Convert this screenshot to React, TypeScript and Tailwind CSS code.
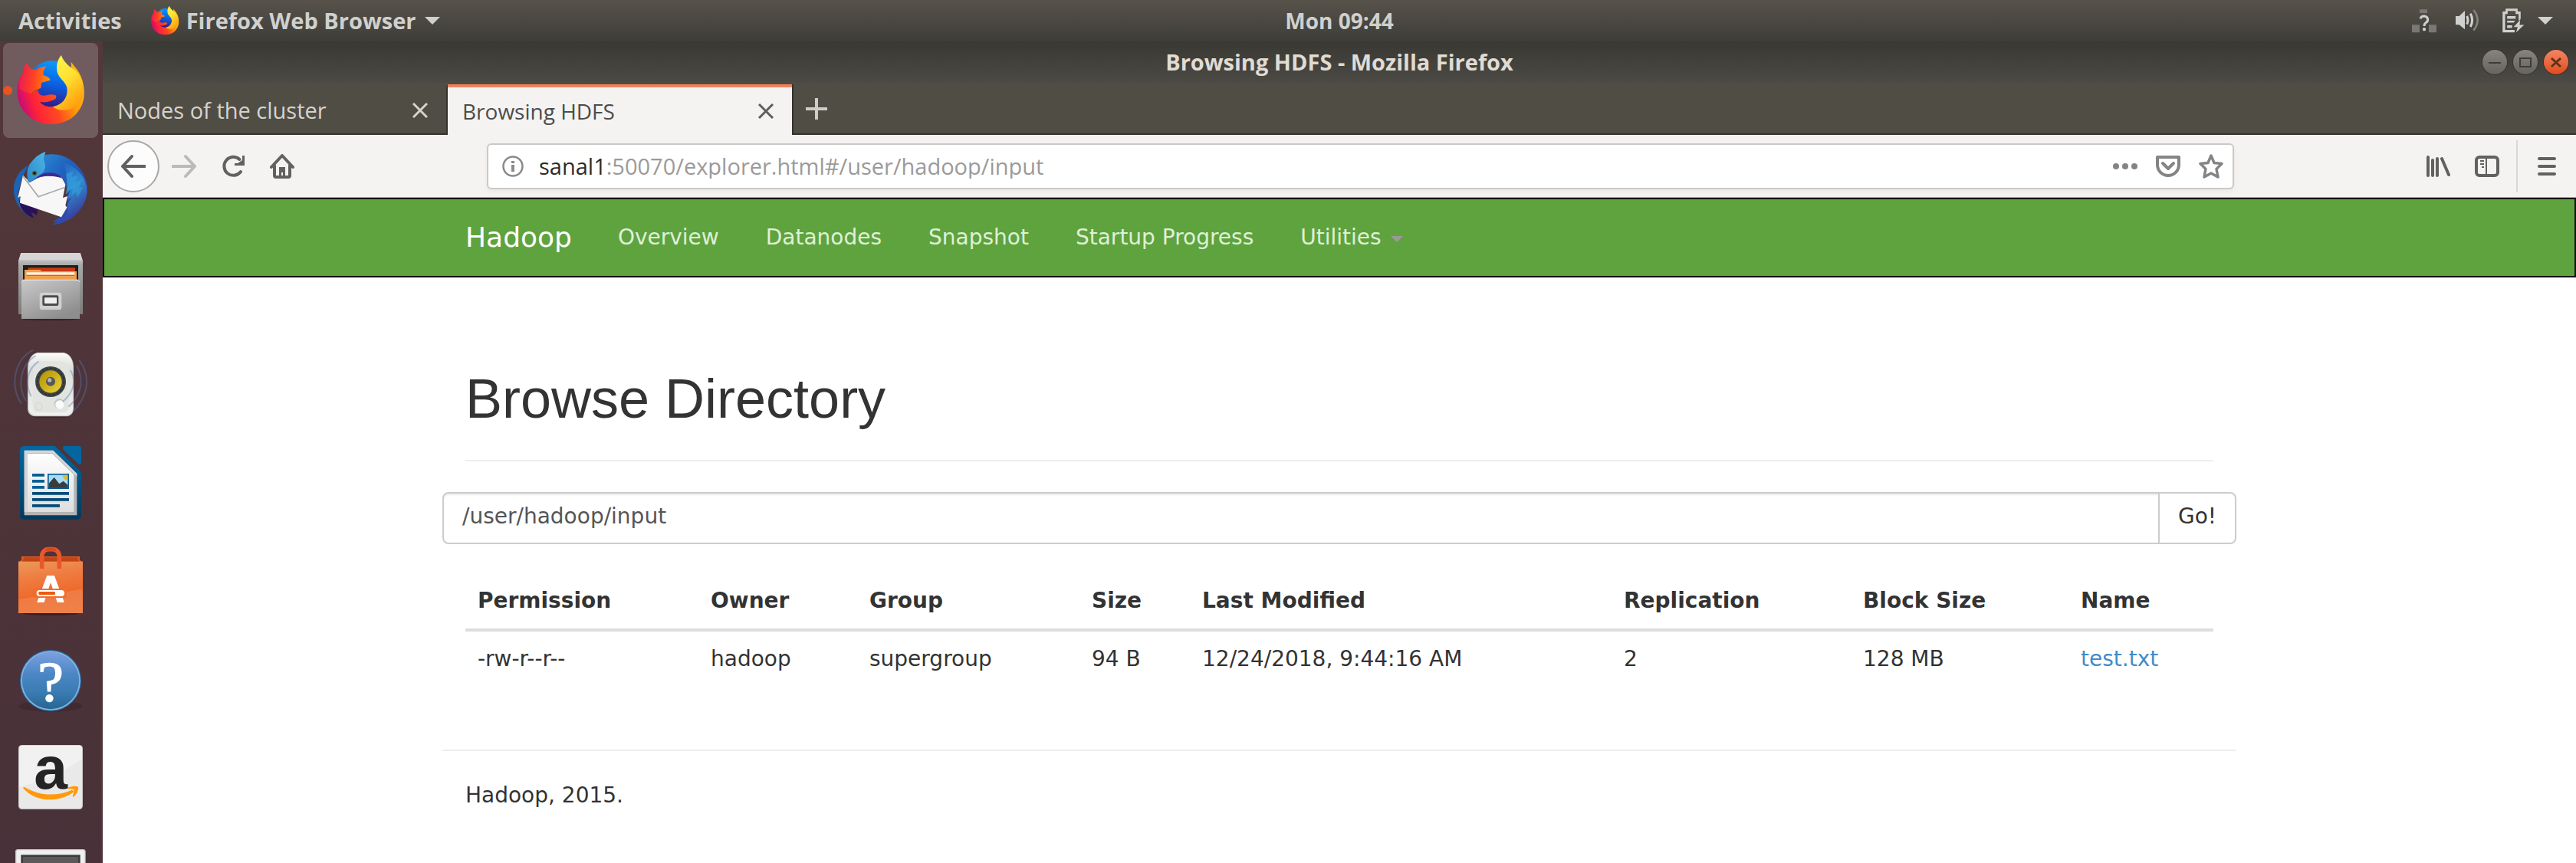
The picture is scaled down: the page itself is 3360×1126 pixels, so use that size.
import React from "react";

const UI = "font-['Open_Sans','Noto_Sans',sans-serif]";

function FirefoxIcon({ className }: { className: string }) {
  return (
    <svg className={className} viewBox="54 48 288 288" aria-hidden="true">
      <defs>
        <linearGradient id="ffBlue" x1="0.6" y1="0" x2="0.4" y2="1">
          <stop offset="0" stopColor="#0a9bff" />
          <stop offset="0.5" stopColor="#0a60e0" />
          <stop offset="1" stopColor="#3a1380" />
        </linearGradient>
        <linearGradient id="ffBody" x1="0" y1="0.6" x2="1" y2="0.3">
          <stop offset="0" stopColor="#c4097c" />
          <stop offset="0.22" stopColor="#ff2338" />
          <stop offset="0.5" stopColor="#ff4a20" />
          <stop offset="0.75" stopColor="#ff980e" />
          <stop offset="1" stopColor="#ffc21a" />
        </linearGradient>
        <linearGradient id="ffFlame" x1="0.2" y1="0" x2="0.7" y2="1">
          <stop offset="0" stopColor="#fff44f" />
          <stop offset="0.45" stopColor="#ffe131" />
          <stop offset="1" stopColor="#ff9a0c" />
        </linearGradient>
        <linearGradient id="ffHead" x1="0" y1="0.3" x2="1" y2="0.4">
          <stop offset="0" stopColor="#ec1a52" />
          <stop offset="0.5" stopColor="#ff4422" />
          <stop offset="1" stopColor="#ff9409" />
        </linearGradient>
      </defs>
      <circle cx="202" cy="168" r="92" fill="url(#ffBlue)" />
      <path d="M96 118C72 140 62 180 70 222C82 284 140 326 205 324C272 322 318 280 328 222C334 180 322 130 290 96L278 80C280 96 276 110 280 130L262 180C268 225 238 256 202 256C178 256 162 246 156 236C180 242 196 234 212 228C222 224 222 214 216 210C196 204 186 212 168 212C152 210 146 196 150 180C120 150 110 130 96 118Z" fill="url(#ffBody)" />
      <path d="M104 84C94 96 91 108 94 122C80 140 72 160 76 186C100 200 124 206 136 204C142 190 150 186 160 182L162 162L196 152C198 144 186 138 170 132C166 118 174 106 182 98C164 98 150 104 140 112L120 108Z" fill="url(#ffHead)" />
      <path d="M240 54C224 72 220 94 224 120C230 146 262 160 264 190C264 225 240 250 206 256C240 282 300 270 322 226C336 180 320 132 286 108C268 96 248 78 240 54Z" fill="url(#ffFlame)" />
      <path d="M148 186C130 190 122 202 124 212C138 196 146 198 150 194Z" fill="#c83a1c" opacity=".7" />
    </svg>
  );
}

function ThunderbirdIcon() {
  return (
    <svg className="size-24" viewBox="54 432 288 288" aria-hidden="true">
      <defs>
        <linearGradient id="tbA" x1="0" y1="0" x2="1" y2="1">
          <stop offset="0" stopColor="#2f9ad8" />
          <stop offset="0.4" stopColor="#1f62c0" />
          <stop offset="1" stopColor="#3a3aa0" />
        </linearGradient>
        <linearGradient id="tbB" x1="0" y1="1" x2="1" y2="0">
          <stop offset="0" stopColor="#2a8ac8" />
          <stop offset="1" stopColor="#4fb4e6" />
        </linearGradient>
        <linearGradient id="tbC" x1="0" y1="0" x2="0.3" y2="1">
          <stop offset="0" stopColor="#2460c0" />
          <stop offset="0.5" stopColor="#2f8fd0" />
          <stop offset="1" stopColor="#3a3a9c" />
        </linearGradient>
      </defs>
      <path d="M110 486C70 506 50 550 54 590C58 636 90 676 130 692L116 668L70 600L84 540Z" fill="#1d62b4" />
      <path d="M74 622L82 650C94 672 112 684 132 692L122 668L144 680L148 660L110 636Z" fill="#2a1258" />
      <path d="M180 444C260 430 330 490 342 566C346 640 290 712 204 718L224 704C216 706 210 706 206 704C240 690 252 672 262 640C270 600 262 560 240 530C210 512 170 516 120 552C100 530 104 500 116 480C134 460 156 450 180 444Z" fill="url(#tbA)" />
      <path d="M90 524L118 552L164 524L240 530L256 560L246 612L264 606L256 642L262 650L240 688L78 632L80 606L70 612Z" fill="#f7f7f8" />
      <path d="M90 528L150 608L252 572" fill="none" stroke="#aaa8a6" strokeWidth="5" />
      <path d="M126 546C170 500 226 510 244 536C214 526 166 520 126 546Z" fill="#3a2a94" />
      <path d="M110 550C98 500 124 450 178 432L176 442C160 470 190 478 170 510C150 530 130 540 116 552Z" fill="url(#tbB)" />
      <path d="M244 470C300 490 340 530 340 590C336 640 300 690 240 708C262 690 268 660 262 646L280 610L262 620L276 580L256 600C270 560 262 500 244 470Z" fill="url(#tbC)" />
      <path d="M258 520L286 506L282 530L304 524L296 552L320 542L308 574L326 570L304 610L296 590L280 606L284 576L266 584Z" fill="#35a0dc" opacity=".6" />
      <circle cx="135" cy="516" r="9" fill="#5c5a34" />
      <circle cx="135" cy="516" r="5" fill="#14140c" />
    </svg>
  );
}

function FilesIcon() {
  return (
    <svg className="size-24" viewBox="54 48 288 288" aria-hidden="true">
      <defs>
        <linearGradient id="fiA" x1="0" y1="0" x2="0" y2="1">
          <stop offset="0" stopColor="#e2e2e2" />
          <stop offset="0.2" stopColor="#a8a8a8" />
          <stop offset="1" stopColor="#7c7c7c" />
        </linearGradient>
        <linearGradient id="fiB" x1="0" y1="0" x2="0.6" y2="1">
          <stop offset="0" stopColor="#c8c8c8" />
          <stop offset="0.5" stopColor="#adadad" />
          <stop offset="1" stopColor="#8e8e8e" />
        </linearGradient>
      </defs>
      <ellipse cx="198" cy="318" rx="112" ry="7" fill="#2c1a1c" opacity=".6" />
      <path d="M82 60H314L324 90V300H72V90Z" fill="url(#fiA)" />
      <path d="M82 60H314L322 88H74Z" fill="#d6d6d6" />
      <path d="M90 108H306V170H90Z" fill="#1e1e1c" />
      <path d="M110 118H294V140H110Z" fill="#c83a12" />
      <path d="M96 126H158L162 132H300V166H96Z" fill="#f0a04a" />
      <path d="M104 136H292V146H104Z" fill="#fff2e0" />
      <path d="M104 146H292V150H104Z" fill="#d8601c" />
      <path d="M84 172L90 164H306L312 172V318H84Z" fill="url(#fiB)" />
      <path d="M84 174L90 166H306L312 174" fill="none" stroke="#e8e8e8" strokeWidth="3" />
      <rect x="155" y="215" width="86" height="67" rx="10" fill="#d0d0d0" />
      <rect x="166" y="226" width="63" height="41" rx="6" fill="#4c4c4c" />
      <rect x="174" y="235" width="48" height="23" rx="2" fill="#efefef" />
    </svg>
  );
}

function RhythmboxIcon() {
  return (
    <svg className="size-24" viewBox="54 432 288 288" aria-hidden="true">
      <defs>
        <linearGradient id="rbA" x1="0" y1="0" x2="0" y2="1">
          <stop offset="0" stopColor="#fbfbfa" />
          <stop offset="0.25" stopColor="#dcdedb" />
          <stop offset="1" stopColor="#f0f0ee" />
        </linearGradient>
        <linearGradient id="rbY" x1="0" y1="0" x2="1" y2="1">
          <stop offset="0" stopColor="#b08e00" />
          <stop offset="1" stopColor="#ecd43c" />
        </linearGradient>
      </defs>
      <rect x="112" y="470" width="172" height="236" rx="36" fill="#2c1a1c" opacity=".5" />
      <path d="M146 450H250C276 456 288 480 288 510V668C288 688 276 700 256 700H142C120 700 108 688 108 668V510C108 480 122 456 146 450Z" fill="#c9ccc8" />
      <path d="M146 452H250C274 458 286 482 286 510V666C286 684 274 696 256 696H142C124 696 112 684 112 666V510C112 480 124 458 146 452Z" fill="url(#rbA)" />
      <path d="M130 500C140 484 160 484 198 484C236 484 256 484 268 500V650C268 672 262 684 246 684H150C134 684 128 672 128 650Z" fill="#e2e4e0" />
      <circle cx="198" cy="564" r="60" fill="#3f4545" />
      <circle cx="198" cy="564" r="52" fill="none" stroke="#2a2e2e" strokeWidth="4" strokeDasharray="10 6" />
      <circle cx="198" cy="564" r="44" fill="url(#rbY)" />
      <circle cx="198" cy="563" r="18" fill="#55585a" />
      <circle cx="194" cy="558" r="8" fill="#b4b8bc" />
      <circle cx="232" cy="650" r="20" fill="#c6c8c4" />
      <circle cx="234" cy="654" r="17" fill="#fafafa" />
      <rect x="140" y="647" width="24" height="28" rx="8" fill="none" stroke="#cfdacd" strokeWidth="3" />
      <g fill="none" stroke="#5577b4" strokeWidth="6" opacity=".4">
        <path d="M130 440C50 480 40 590 84 650" />
        <path d="M140 462C78 500 66 580 102 640" />
        <path d="M152 484C106 514 96 570 122 622" />
        <path d="M310 480C356 540 346 620 288 678" />
        <path d="M300 500C332 560 316 620 268 662" />
        <path d="M276 520C300 560 288 606 246 642" />
      </g>
    </svg>
  );
}

function WriterIcon() {
  return (
    <svg className="size-24" viewBox="54 636 288 288" aria-hidden="true">
      <defs>
        <linearGradient id="wrA" x1="0" y1="0" x2="0" y2="1">
          <stop offset="0" stopColor="#0369a3" />
          <stop offset="1" stopColor="#023a5c" />
        </linearGradient>
        <linearGradient id="wrB" x1="0" y1="0" x2="0" y2="1">
          <stop offset="0" stopColor="#fefefe" />
          <stop offset="1" stopColor="#dedede" />
        </linearGradient>
      </defs>
      <path d="M96 636H214L318 738V906Q318 923 300 923H96Q78 923 78 906V654Q78 636 96 636Z" fill="url(#wrA)" />
      <path d="M252 636H310Q318 636 318 644V700Q316 710 308 708L248 650Q242 640 252 636Z" fill="#0466a0" />
      <path d="M95 653H208L301 744V907H95Z" fill="#b4b4b4" />
      <path d="M95 653H208L301 744V756L206 664H108V895H95Z" fill="#d4d4d4" />
      <path d="M108 666H205L289 748V894H108Z" fill="url(#wrB)" />
      <path d="M126 744H174V755H126ZM126 768H174V779H126ZM126 792H174V803H126Z" fill="#035f96" />
      <path d="M126 816H270V827H126ZM126 840H270V851H126ZM126 864H234V875H126Z" fill="#034a76" />
      <rect x="186" y="744" width="84" height="60" fill="#045c92" />
      <rect x="191" y="749" width="74" height="49" fill="#a6dcf8" />
      <path d="M244 749H265V770Q248 768 244 749Z" fill="#dcb83c" />
      <path d="M191 798V782L212 758L232 784L248 773L265 788V798Z" fill="#3c3c3c" />
    </svg>
  );
}

function SoftwareIcon() {
  return (
    <svg className="size-24 overflow-visible" viewBox="54 150 288 288" aria-hidden="true">
      <defs>
        <linearGradient id="swA" x1="0" y1="0" x2="0.2" y2="1">
          <stop offset="0" stopColor="#ea9a58" />
          <stop offset="0.35" stopColor="#ef7c42" />
          <stop offset="0.7" stopColor="#ef6a2c" />
          <stop offset="0.71" stopColor="#f07a42" />
          <stop offset="1" stopColor="#ee8048" />
        </linearGradient>
      </defs>
      <ellipse cx="198" cy="421" rx="110" ry="8" fill="#2a1416" opacity=".6" />
      <path d="M84 198H312V212L324 220H72L84 212Z" fill="#e65a1e" />
      <path d="M94 202H302L310 220H86Z" fill="#c44416" />
      <rect x="72" y="218" width="252" height="202" fill="url(#swA)" />
      <path d="M164 246V196C164 182 176 170 190 170H206C220 170 232 182 232 196V246" fill="none" stroke="#e9582a" strokeWidth="17" />
      <path d="M184 164H212L222 176H174Z" fill="#d84818" />
      <text x="198" y="375" textAnchor="middle" fontSize="146" fontWeight="700" fill="#fff" stroke="#fff" strokeWidth="6" className="font-['Liberation_Sans',sans-serif]">A</text>
      <rect x="136" y="324" width="124" height="36" fill="#ef6e32" />
      <rect x="143" y="330" width="109" height="24" rx="12" fill="#fff" />
      <rect x="151" y="336" width="65" height="12" rx="4" fill="#ec5a10" />
    </svg>
  );
}

function HelpIcon() {
  return (
    <svg className="size-24 overflow-visible" viewBox="54 534 288 288" aria-hidden="true">
      <defs>
        <linearGradient id="heA" x1="0" y1="0" x2="0" y2="1">
          <stop offset="0" stopColor="#7da0e0" />
          <stop offset="0.4" stopColor="#4a86c4" />
          <stop offset="0.7" stopColor="#3a7cb2" />
          <stop offset="1" stopColor="#266492" />
        </linearGradient>
      </defs>
      <ellipse cx="198" cy="784" rx="124" ry="22" fill="#3a2428" opacity=".5" />
      <circle cx="198" cy="684" r="120" fill="#2c6ca4" />
      <circle cx="198" cy="684" r="114" fill="url(#heA)" stroke="#86b4dc" strokeWidth="5" />
      <text x="198" y="766" textAnchor="middle" fontSize="224" fill="#fff" stroke="#fff" strokeWidth="5" className="font-['Liberation_Serif',serif]">?</text>
    </svg>
  );
}

function AmazonIcon() {
  return (
    <svg className="size-24 overflow-visible" viewBox="54 918 288 288" aria-hidden="true">
      <rect x="72" y="936" width="252" height="252" rx="14" fill="#c9c7c7" />
      <rect x="75" y="938" width="246" height="246" rx="12" fill="#e9e9e9" />
      <path d="M87 938H309Q321 938 321 950V990Q230 1060 75 1100V950Q75 938 87 938Z" fill="#f1f1f1" />
      <text x="198" y="1106" textAnchor="middle" fontSize="236" fontWeight="700" fill="#242424" className="font-['Liberation_Sans',sans-serif]">a</text>
      <path d="M90 1104Q92 1098 102 1104C160 1138 226 1136 282 1112L290 1118C240 1160 140 1166 90 1104Z" fill="#ff9a0c" />
      <path d="M262 1106C276 1096 296 1096 306 1100C308 1112 300 1130 286 1140C282 1138 290 1122 290 1112C286 1106 270 1110 262 1106Z" fill="#ff9a0c" />
    </svg>
  );
}

function TerminalIcon() {
  return (
    <svg className="size-24" viewBox="54 1302 288 288" aria-hidden="true">
      <rect x="60" y="1344" width="275" height="210" rx="10" fill="#c8c8c8" />
      <rect x="64" y="1348" width="267" height="200" rx="8" fill="#f0f0f0" />
      <rect x="82" y="1366" width="232" height="170" fill="#3c3c3c" />
      <rect x="90" y="1374" width="216" height="154" fill="#5a5a5a" />
    </svg>
  );
}

function Dock() {
  const apps = [
    { name: "Thunderbird Mail", icon: <ThunderbirdIcon /> },
    { name: "Files", icon: <FilesIcon /> },
    { name: "Rhythmbox", icon: <RhythmboxIcon /> },
    { name: "LibreOffice Writer", icon: <WriterIcon /> },
    { name: "Ubuntu Software", icon: <SoftwareIcon /> },
    { name: "Help", icon: <HelpIcon /> },
    { name: "Amazon", icon: <AmazonIcon /> },
    { name: "Terminal", icon: <TerminalIcon /> },
  ];
  return (
    <aside className="flex w-[134px] shrink-0 flex-col gap-1 overflow-hidden border-r-2 border-[#50393c] bg-linear-to-b from-[#53373a] to-[#483138] px-1 pt-[2px]">
      <button aria-label="Firefox" className="relative flex h-[124px] w-[124px] shrink-0 items-center justify-center rounded-lg bg-[#705c5e]">
        <span className="absolute left-0 size-3 rounded-full bg-[#e95420]" />
        <FirefoxIcon className="size-24" />
      </button>
      {apps.map((a) => (
        <button key={a.name} aria-label={a.name} className="flex h-[124px] w-[124px] shrink-0 items-center justify-center">
          {a.icon}
        </button>
      ))}
    </aside>
  );
}

function TopBar() {
  return (
    <header className="grid h-[54px] shrink-0 grid-cols-[1fr_auto_1fr] items-center bg-linear-to-b from-[#57534b] to-[#3e3d38] text-[29px] leading-8 font-bold text-[#d0d0ce]">
      <div className="flex items-center pl-6">
        <button>Activities</button>
        <button className="ml-9 flex items-center">
          <FirefoxIcon className="size-10" />
          <span className="ml-2">Firefox Web Browser</span>
          <svg className="ml-3 h-[10px] w-5" viewBox="0 0 20 10" aria-hidden="true"><path d="M0 0H20L10 10Z" fill="#d0d0ce" /></svg>
        </button>
      </div>
      <button className="ml-[134px] text-[28px]">Mon 09:44</button>
      <div className="flex items-center justify-end pr-[30px]">
        <svg className="h-8 w-8" viewBox="48 32 96 96" aria-label="Network">
          <path d="M78 36H108V50H78ZM48 96H78V126H48ZM114 96H144V126H114Z" fill="#7a7874" />
          <path d="M81 72Q84 62 96 62Q110 64 110 76Q110 84 102 88Q96 92 96 101" fill="none" stroke="#d0d0ce" strokeWidth="9" />
          <rect x="90" y="108" width="12" height="12" rx="4" fill="#d0d0ce" />
        </svg>
        <svg className="ml-6 h-8 w-8" viewBox="213 32 96 96" aria-label="Volume">
          <path d="M216 62H230L252 41V114L230 96H216Z" fill="#d0d0ce" />
          <path d="M260 62Q268 78 260 94M274 52Q288 78 274 104" fill="none" stroke="#d0d0ce" strokeWidth="9" />
          <path d="M286 38Q318 78 286 118" fill="none" stroke="#84827c" strokeWidth="8" />
        </svg>
        <svg className="ml-7 h-8 w-8" viewBox="390 30 96 98" aria-label="Battery">
          <path d="M396 42H408V31H456V42H468V72L460 80V52H448V40H416V52H406V116H444V126H396Z" fill="#d0d0ce" />
          <path d="M414 61H448V71H414ZM414 79H446L440 87H414ZM414 97H434V108H414Z" fill="#d0d0ce" />
          <path d="M466 76L440 104H456L450 126L482 96H464Z" fill="#d0d0ce" />
        </svg>
        <svg className="ml-4 h-[10px] w-5" viewBox="0 0 20 10" aria-hidden="true"><path d="M0 0H20L10 10Z" fill="#d0d0ce" /></svg>
      </div>
    </header>
  );
}

function TitleBar() {
  const base = "flex size-8 items-center justify-center rounded-full shadow-[0_0_0_1px_#35342f] bg-linear-to-b";
  return (
    <div className="grid h-[54px] grid-cols-[1fr_auto_1fr] items-center bg-linear-to-b from-[#3a3833] to-[#4c4a44] text-[29px] leading-8 font-bold text-[#e0dcd4]">
      <span className="col-start-2">Browsing HDFS - Mozilla Firefox</span>
      <div className="flex justify-end gap-2 pr-[10px]">
        <button aria-label="Minimize" className={`${base} from-[#86847d] to-[#65635c]`}>
          <svg className="size-8" viewBox="0 0 32 32"><path d="M8 17H24" stroke="#3e3c37" strokeWidth="2" /></svg>
        </button>
        <button aria-label="Maximize" className={`${base} from-[#86847d] to-[#65635c]`}>
          <svg className="size-8" viewBox="0 0 32 32"><path d="M9 11H23V22H9Z" fill="none" stroke="#3e3c37" strokeWidth="2" /></svg>
        </button>
        <button aria-label="Close" className={`${base} from-[#f48462] to-[#e04a16]`}>
          <svg className="size-8" viewBox="0 0 32 32"><path d="M10 11L22 22M22 11L10 22" stroke="#5a3418" strokeWidth="3" /></svg>
        </button>
      </div>
    </div>
  );
}

function CloseX() {
  return (
    <svg className="size-5" viewBox="0 0 20 20" aria-hidden="true">
      <path d="M1 1L19 19M19 1L1 19" stroke="currentColor" strokeWidth="3" />
    </svg>
  );
}

function Tabs() {
  return (
    <div className="flex h-[68px] items-end bg-[#504d45] text-[28px] leading-8">
      <div className="flex h-[66px] w-[450px] items-center justify-between border-t-4 border-r-2 border-b-2 border-t-transparent border-r-[#33322d] border-b-[#33322d] pr-6 pl-[19px] text-[#d6d3cc]">
        <button className="text-[29px]">Nodes of the cluster</button>
        <button aria-label="Close tab"><CloseX /></button>
      </div>
      <div className="flex h-[66px] w-[449px] items-center justify-between border-t-4 border-[#f0825a] bg-[#f4f3f2] pr-6 pl-[19px] text-[#4c4c4c]">
        <button>Browsing HDFS</button>
        <button aria-label="Close tab" className="text-[#5e5e5e]"><CloseX /></button>
      </div>
      <div className="flex h-[66px] flex-1 items-center border-b-2 border-l-2 border-[#33322d] pl-4">
        <button aria-label="New tab" className="text-[#cfccc5]">
          <svg className="size-7" viewBox="0 0 28 28"><path d="M14 0V28M0 14H28" stroke="currentColor" strokeWidth="4" /></svg>
        </button>
      </div>
    </div>
  );
}

function Toolbar() {
  return (
    <div className="flex h-[82px] items-center border-b border-[#b4b2b0] bg-[#f4f3f2] text-[29px] leading-8 text-[#616161]">
      <button aria-label="Back" className="ml-[6px] flex size-[68px] items-center justify-center rounded-full border-2 border-[#aaa8a6] bg-[#fcfcfc]">
        <svg className="size-8" viewBox="0 0 32 32"><path d="M14 3L2 16L14 29M2 16H31" fill="none" stroke="currentColor" strokeWidth="4" strokeLinecap="round" strokeLinejoin="round" /></svg>
      </button>
      <button aria-label="Forward" className="ml-4 text-[#bcbab8]">
        <svg className="size-8" viewBox="0 0 32 32"><path d="M18 3L30 16L18 29M30 16H1" fill="none" stroke="currentColor" strokeWidth="4" strokeLinecap="round" strokeLinejoin="round" /></svg>
      </button>
      <button aria-label="Reload" className="ml-8">
        <svg className="size-8" viewBox="0 0 32 32"><path d="M24.500 7A12 12 0 1 0 26 23" fill="none" stroke="currentColor" strokeWidth="4" strokeLinecap="round" /><path d="M31 2V15H18V12H22L28 8V2Z" fill="currentColor" /></svg>
      </button>
      <button aria-label="Home" className="ml-8">
        <svg className="size-8" viewBox="0 0 32 32"><path d="M2 17L16 2L30 17M6 15V28Q6 30 8 30H24Q26 30 26 28V15" fill="none" stroke="currentColor" strokeWidth="4" strokeLinecap="round" strokeLinejoin="round" /><path d="M12 17H20V30H17V24H15V30H12Z" fill="currentColor" /></svg>
      </button>
      <div className="ml-[251px] flex h-[60px] flex-1 items-center rounded-md border-2 border-[#cbc9c6] bg-white pr-3 pl-[18px] shadow-[0_2px_6px_#0000000d]">
        <svg className="size-7 shrink-0 text-[#8a8a8a]" viewBox="0 0 28 28" aria-hidden="true"><circle cx="14" cy="14" r="12.500" fill="none" stroke="currentColor" strokeWidth="2.500" /><path d="M12 12H16V21H12ZM12 7H16V10H12Z" fill="currentColor" /></svg>
        <label htmlFor="url" className="ml-5 text-[#2c2c2c]">sanal1</label>
        <input id="url" type="text" defaultValue=":50070/explorer.html#/user/hadoop/input" className="min-w-0 flex-1 bg-transparent text-[#9c9a98] outline-none" />
        <button aria-label="Page actions" className="text-[#848484]">
          <svg className="size-8" viewBox="0 0 32 32"><circle cx="4" cy="16" r="4" fill="currentColor" /><circle cx="16" cy="16" r="4" fill="currentColor" /><circle cx="28" cy="16" r="4" fill="currentColor" /></svg>
        </button>
        <button aria-label="Save to Pocket" className="ml-6 text-[#848484]">
          <svg className="size-8" viewBox="0 0 32 32"><path d="M2 4H30V14A14 14 0 0 1 2 14ZM9 12L16 19L23 12" fill="none" stroke="currentColor" strokeWidth="4" strokeLinecap="round" strokeLinejoin="round" /></svg>
        </button>
        <button aria-label="Bookmark this page" className="ml-6 text-[#848484]">
          <svg className="size-8" viewBox="0 0 32 32"><path d="M16 2L20 11.500L30 12.500L23 19.500L25 30L16 25L7 30L9 19.500L2 12.500L12 11.500Z" fill="none" stroke="currentColor" strokeWidth="3.500" strokeLinejoin="round" /></svg>
        </button>
      </div>
      <button aria-label="Library" className="ml-[250px]">
        <svg className="size-8" viewBox="0 0 32 32"><path d="M3 4V28M9 8V28M15 6V28M21 6L30 27" fill="none" stroke="currentColor" strokeWidth="4" strokeLinecap="round" /></svg>
      </button>
      <button aria-label="Sidebars" className="ml-8">
        <svg className="size-8" viewBox="0 0 32 32"><rect x="2" y="4" width="28" height="24" rx="4" fill="none" stroke="currentColor" strokeWidth="4" /><path d="M15 4V28M7 9H12M7 13H12M9 17H12" stroke="currentColor" strokeWidth="2" /></svg>
      </button>
      <div className="mx-[22px] h-[68px] w-[2px] bg-[#d8d7d5]" />
      <button aria-label="Open menu" className="mr-[22px]">
        <svg className="size-8" viewBox="0 0 32 32"><path d="M6 6H26M6 16H26M6 26H26" stroke="currentColor" strokeWidth="4" strokeLinecap="round" /></svg>
      </button>
    </div>
  );
}

const columns = [
  { head: "Permission", cell: "-rw-r--r--", width: "w-[304px]" },
  { head: "Owner", cell: "hadoop", width: "w-[207px]" },
  { head: "Group", cell: "supergroup", width: "w-[290px]" },
  { head: "Size", cell: "94 B", width: "w-[144px]" },
  { head: "Last Modified", cell: "12/24/2018, 9:44:16 AM", width: "w-[550px]" },
  { head: "Replication", cell: "2", width: "w-[312px]" },
  { head: "Block Size", cell: "128 MB", width: "w-[284px]" },
  { head: "Name", cell: "test.txt", width: "w-[189px]" },
];

function Page() {
  return (
    <div className="flex-1 bg-white font-['DejaVu_Sans',sans-serif] text-[28px] leading-10 text-[#333333]">
      <nav className="h-[104px] border-2 border-[#101010] bg-[#5fa33e]">
        <div className="mx-auto flex h-full max-w-[2340px] items-center px-[30px] text-[#dff0d8]">
          <a href="#" className="text-[36px] text-white">Hadoop</a>
          <ul className="ml-[60px] flex items-center gap-[61px]">
            {["Overview", "Datanodes", "Snapshot", "Startup Progress"].map((t) => (
              <li key={t}><a href="#">{t}</a></li>
            ))}
            <li>
              <a href="#" className="flex items-center">
                Utilities
                <svg className="mt-1 ml-3 h-2 w-4" viewBox="0 0 16 8" aria-hidden="true"><path d="M0 0H16L8 8Z" fill="#999999" /></svg>
              </a>
            </li>
          </ul>
        </div>
      </nav>
      <main className="mx-auto max-w-[2340px]">
        <div className="px-[30px] pt-[118px]">
          <h1 className="border-b-2 border-[#eeeeee] pb-10 font-['Liberation_Sans',sans-serif] text-[72px] leading-20">Browse Directory</h1>
        </div>
        <form className="mt-10 flex h-[68px]" onSubmit={(e) => e.preventDefault()}>
          <input aria-label="Directory" type="text" defaultValue="/user/hadoop/input" className="min-w-0 flex-1 rounded-l-lg border-2 border-[#cccccc] px-6 pb-1 text-[#555555] shadow-[inset_0_2px_2px_#00000013] outline-none" />
          <button type="submit" className="rounded-r-lg border-2 border-l-0 border-[#cccccc] px-6 pb-1">Go!</button>
        </form>
        <div className="px-[30px] pt-10">
          <table className="w-full table-fixed text-left">
            <thead>
              <tr className="border-b-4 border-[#dddddd]">
                {columns.map((c) => (
                  <th key={c.head} scope="col" className={`${c.width} px-4 pt-[14px] pb-4 font-bold`}>{c.head}</th>
                ))}
              </tr>
            </thead>
            <tbody>
              <tr>
                {columns.map((c) => (
                  <td key={c.head} className="px-4 py-4">
                    {c.head === "Name" ? <a href="#" className="text-[#428bca]">{c.cell}</a> : c.cell}
                  </td>
                ))}
              </tr>
            </tbody>
          </table>
        </div>
        <footer className="mt-[82px] border-t-2 border-[#eeeeee] px-[30px] pt-[38px]">
          <p>Hadoop, 2015.</p>
        </footer>
      </main>
    </div>
  );
}

export default function App() {
  return (
    <div className={`flex h-screen flex-col overflow-hidden ${UI}`}>
      <TopBar />
      <div className="flex min-h-0 flex-1">
        <Dock />
        <div className="flex min-w-0 flex-1 flex-col">
          <TitleBar />
          <Tabs />
          <Toolbar />
          <Page />
        </div>
      </div>
    </div>
  );
}
